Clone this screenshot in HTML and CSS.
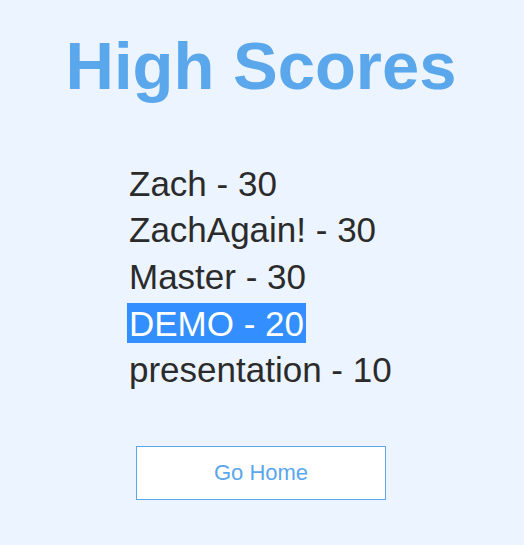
FILE: index.html
```html
<!DOCTYPE html>
<html>
<head>
<meta charset="utf-8">
<link rel="stylesheet" href="styles.css">
</head>
<body>
<main class="page">
  <h1 class="title">High Scores</h1>
  <ul class="scores">
    <li>Zach - 30</li>
    <li>ZachAgain! - 30</li>
    <li>Master - 30</li>
    <li><span class="selected">DEMO - 20</span></li>
    <li>presentation - 10</li>
  </ul>
  <button class="home-btn">Go Home</button>
</main>
</body>
</html>
```
FILE: styles.css
```css
html, body {
  margin: 0;
  padding: 0;
  background: #ebf4ff;
}
.page {
  width: 524px;
  height: 545px;
  display: flex;
  flex-direction: column;
  align-items: center;
  font-family: "Liberation Sans", Arial, sans-serif;
  padding-top: 27px;
  box-sizing: border-box;
}
.title {
  margin: 0 2px 0 0;
  font-size: 67px;
  font-weight: bold;
  color: #5aa7ec;
  line-height: normal;
}
.scores {
  list-style: none;
  margin: 57px 0 0 0;
  padding: 0 0 0 129px;
  align-self: stretch;
  font-size: 35px;
  line-height: 46.4px;
  color: #2b2b2b;
}
.selected {
  background: #338fff;
  color: #ffffff;
  padding: 0.5px 2px;
  margin: 0 -2px;
}
.home-btn {
  margin: 53px 2px 0 0;
  width: 250px;
  height: 54px;
  background: #ffffff;
  border: 1px solid #5aa7ec;
  color: #5aa7ec;
  font-family: "Liberation Sans", Arial, sans-serif;
  font-size: 22px;
  padding: 0;
}
```
